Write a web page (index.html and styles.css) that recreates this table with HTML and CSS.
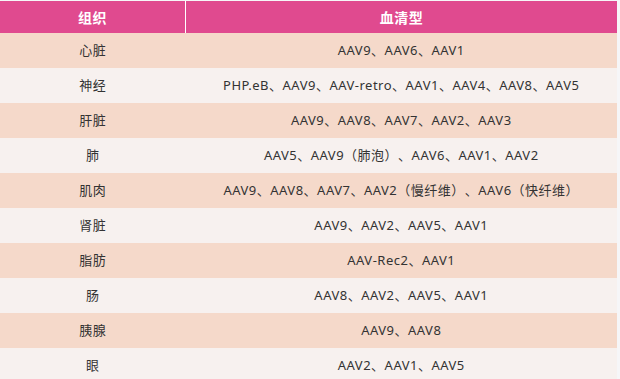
FILE: index.html
```html
<!DOCTYPE html>
<html lang="zh-CN">
<head>
<meta charset="utf-8">
<link rel="stylesheet" href="styles.css">
</head>
<body>
<table class="serotype">
  <thead>
    <tr><th class="c1">组织</th><th class="c2">血清型</th></tr>
  </thead>
  <tbody>
    <tr class="odd"><td>心脏</td><td>AAV9、AAV6、AAV1</td></tr>
    <tr class="even"><td>神经</td><td>PHP.eB、AAV9、AAV-retro、AAV1、AAV4、AAV8、AAV5</td></tr>
    <tr class="odd"><td>肝脏</td><td>AAV9、AAV8、AAV7、AAV2、AAV3</td></tr>
    <tr class="even"><td>肺</td><td>AAV5、AAV9（肺泡）、AAV6、AAV1、AAV2</td></tr>
    <tr class="odd"><td>肌肉</td><td>AAV9、AAV8、AAV7、AAV2（慢纤维）、AAV6（快纤维）</td></tr>
    <tr class="even"><td>肾脏</td><td>AAV9、AAV2、AAV5、AAV1</td></tr>
    <tr class="odd"><td>脂肪</td><td>AAV-Rec2、AAV1</td></tr>
    <tr class="even"><td>肠</td><td>AAV8、AAV2、AAV5、AAV1</td></tr>
    <tr class="odd"><td>胰腺</td><td>AAV9、AAV8</td></tr>
    <tr class="even"><td>眼</td><td>AAV2、AAV1、AAV5</td></tr>
  </tbody>
</table>
</body>
</html>
```
FILE: styles.css
```css
html, body {
  margin: 0;
  padding: 0;
  background: #f6f6f8;
}
body {
  padding-top: 1px;
  font-family: "Noto Sans", "Noto Sans CJK SC", sans-serif;
  color: #333333;
  text-spacing-trim: space-all;
}
.serotype {
  width: 617px;
  border-collapse: collapse;
  table-layout: fixed;
}
.serotype th {
  background: #e04a8f;
  color: #ffffff;
  font-weight: bold;
  font-size: 14px;
  letter-spacing: 0.5px;
  height: 32px;
  padding: 0;
  text-align: center;
}
.serotype th.c1 {
  width: 185px;
  border-right: 1px solid #ffffff;
}
.serotype td {
  height: 35px;
  padding: 0;
  text-align: center;
  font-size: 13px;
  letter-spacing: 0.5px;
  line-height: 35px;
}
.serotype tr.odd td { background: #f5d9ca; }
.serotype tr.even td { background: #f7f1ef; }
```
